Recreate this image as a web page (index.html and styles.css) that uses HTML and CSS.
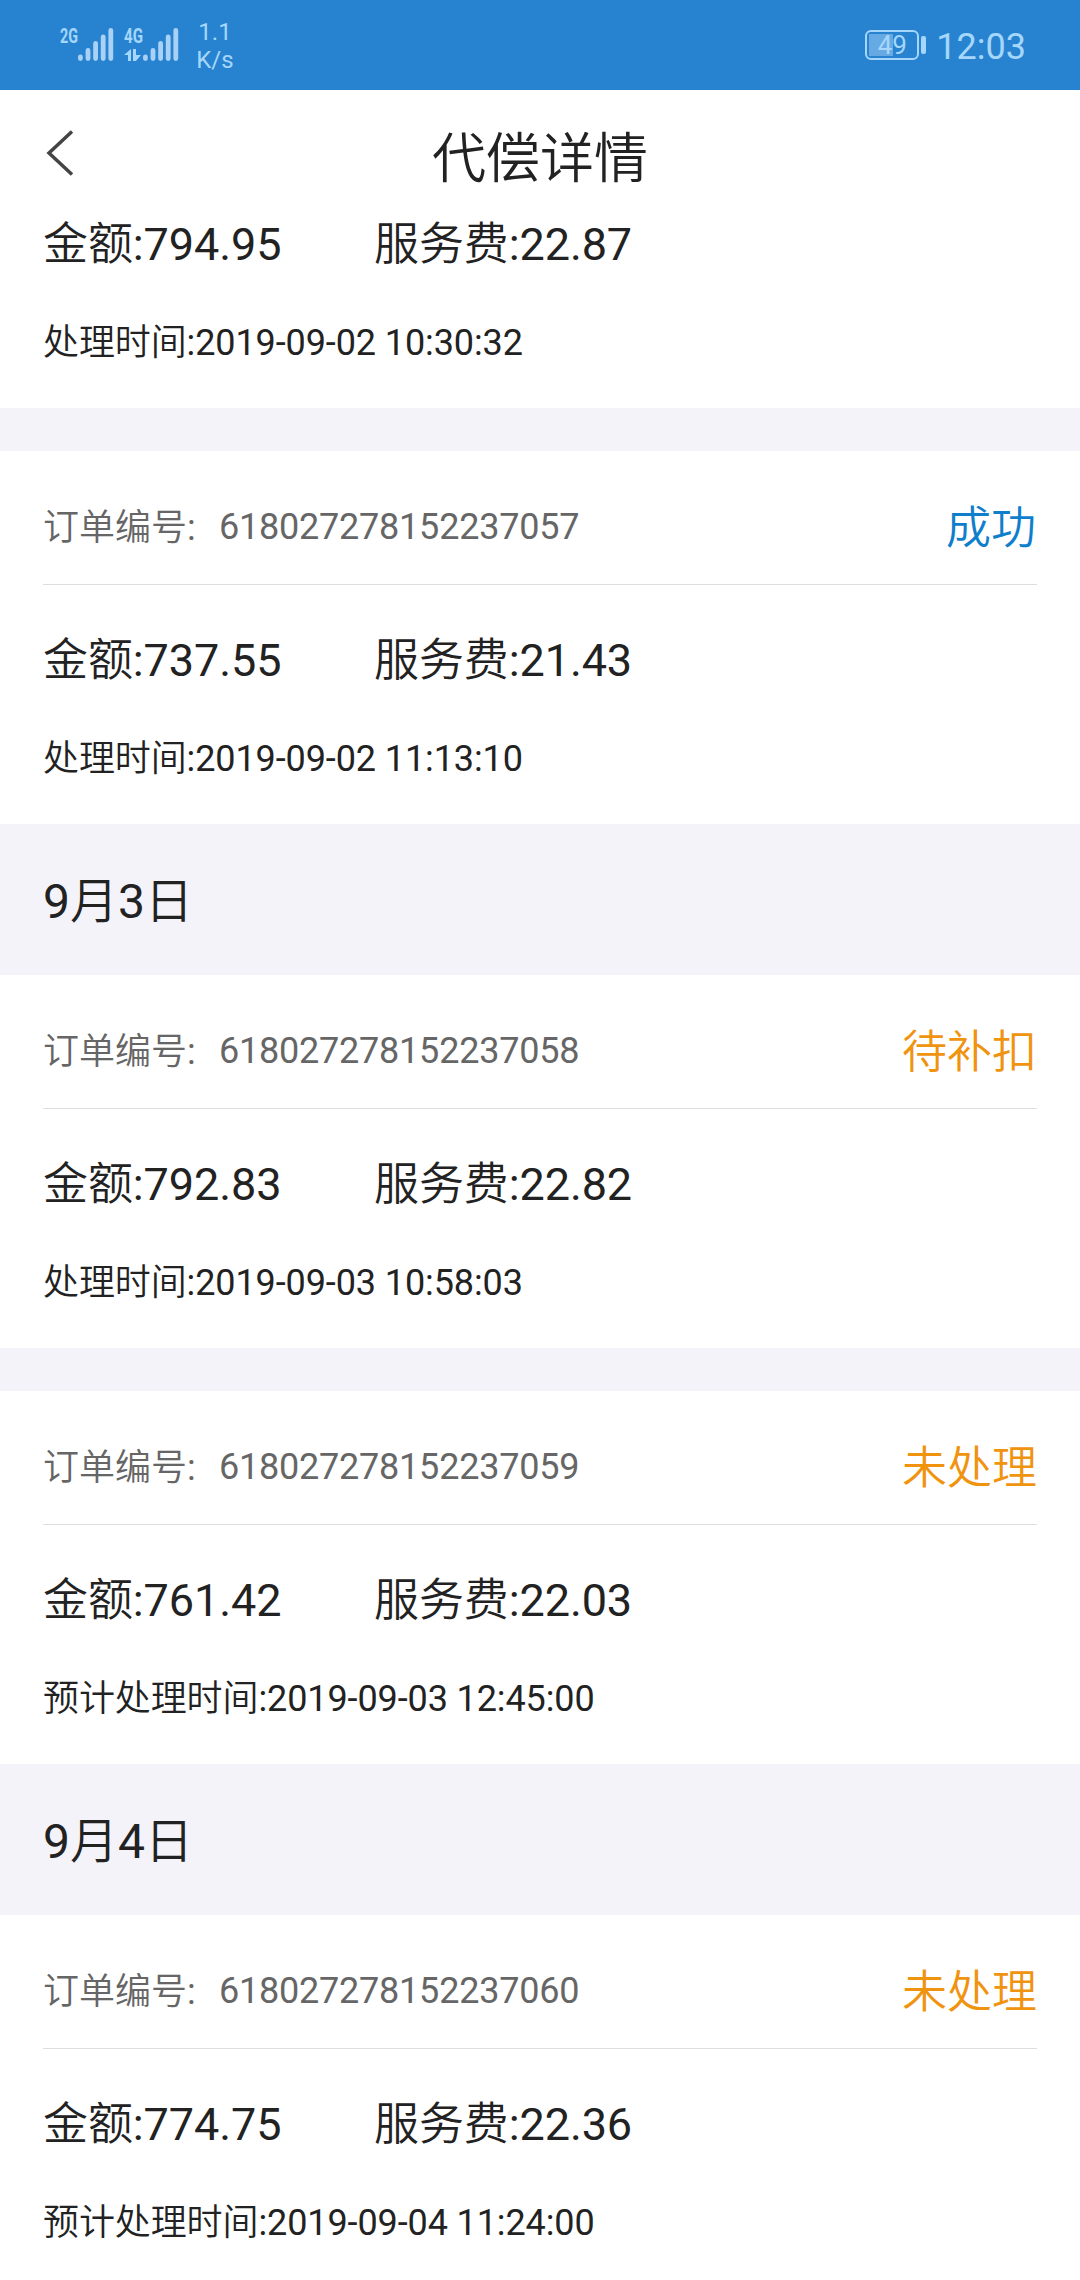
FILE: index.html
```html
<!DOCTYPE html>
<html lang="zh-CN">
<head>
<meta charset="utf-8">
<title>代偿详情</title>
<link rel="stylesheet" href="styles.css">
</head>
<body>
<header class="status">
  <svg class="signals" width="126" height="48" viewBox="-6 -6 126 48">
    <g class="network"><text x="0" y="16" textLength="18" lengthAdjust="spacingAndGlyphs">2G</text><text x="64" y="16" textLength="19" lengthAdjust="spacingAndGlyphs">4G</text></g>
    <g fill="none" stroke="#a9d0f5" stroke-width="4.8" stroke-linecap="round">
      <path d="M20.400 30v1.600M28 23.500v8.100M35.600 16.500v15.100M43.200 10v21.600M50.800 3.500v28.100"/>
      <path d="M85.400 30v1.600M93 23.500v8.100M100.600 16.500v15.100M108.200 10v21.600M115.800 3.500v28.100"/>
    </g>
    <path d="M71 22v12h-3V28h-4zM73 22h3v6h5l-5 6h-3z" fill="#a5d6fb"/>
  </svg>
  <div class="speed"><span>1.1</span><span>K/s</span></div>
  <div class="battery"><span>49</span></div>
  <i class="nub"></i>
  <time class="clock">12:03</time>
</header>
<nav class="nav">
  <svg class="back" width="30" height="46" viewBox="0 0 30 46" fill="none" stroke="#444" stroke-width="3.5"><path d="M27 1.500L4 23l23 21.500"/></svg>
  <h1>代偿详情</h1>
</nav>
<main>
  <section class="card first">
    <div class="sums"><span class="amount">金额:794.95</span><span>服务费:22.87</span></div>
    <p class="when">处理时间:2019-09-02 10:30:32</p>
  </section>
  <section class="card gap">
    <div class="order"><span class="label">订单编号:</span><span class="number">618027278152237057</span><b class="state done">成功</b></div>
    <div class="sums"><span class="amount">金额:737.55</span><span>服务费:21.43</span></div>
    <p class="when">处理时间:2019-09-02 11:13:10</p>
  </section>
  <h2 class="date">9月3日</h2>
  <section class="card">
    <div class="order"><span class="label">订单编号:</span><span class="number">618027278152237058</span><b class="state">待补扣</b></div>
    <div class="sums"><span class="amount">金额:792.83</span><span>服务费:22.82</span></div>
    <p class="when">处理时间:2019-09-03 10:58:03</p>
  </section>
  <section class="card gap">
    <div class="order"><span class="label">订单编号:</span><span class="number">618027278152237059</span><b class="state">未处理</b></div>
    <div class="sums"><span class="amount">金额:761.42</span><span>服务费:22.03</span></div>
    <p class="when">预计处理时间:2019-09-03 12:45:00</p>
  </section>
  <h2 class="date">9月4日</h2>
  <section class="card">
    <div class="order"><span class="label">订单编号:</span><span class="number">618027278152237060</span><b class="state">未处理</b></div>
    <div class="sums"><span class="amount">金额:774.75</span><span>服务费:22.36</span></div>
    <p class="when">预计处理时间:2019-09-04 11:24:00</p>
  </section>
</main>
</body>
</html>
```
FILE: styles.css
```css
* { box-sizing: border-box; }
body { margin: 0; width: 1080px; height: 2280px; overflow: hidden; background: #f3f3f9; color: #222; font-family: Roboto, "Noto Sans CJK SC DemiLight", "Noto Sans CJK SC Light", "Noto Sans CJK SC", sans-serif; }
h1, h2, p { margin: 0; font-weight: 400; }
.status { display: flex; align-items: center; height: 90px; padding: 0 54px; background: #2783d0; color: #a5d6fb; }
.network { font: 700 21px Roboto, sans-serif; fill: #a5d6fb; }
.speed { display: flex; flex-direction: column; align-items: center; width: 70px; padding-top: 2px; font-size: 24px; line-height: 28px; }
.battery { margin-left: auto; width: 54px; height: 30px; padding: 2px; border: 2px solid #a5d6fb; border-radius: 6px; background: linear-gradient(#67aae3, #67aae3) 2px 2px / 24px 22px no-repeat; font-size: 26px; line-height: 23px; text-align: center; }
.nub { width: 5px; height: 18px; margin-left: 2px; border-radius: 2px; background: #a5d6fb; }
.clock { margin-left: 10px; padding-top: 3px; font-size: 36px; line-height: 44px; }
.nav { display: grid; grid-template-columns: 90px 1fr 90px; align-items: center; height: 125px; background: #fff; }
.back { margin-left: 45px; }
.nav h1 { padding-top: 14px; font-size: 54px; line-height: 64px; text-align: center; }
.card { height: 373px; padding: 0 43px; background: #fff; }
.gap { margin-top: 43px; }
.order { display: flex; align-items: flex-start; height: 134px; padding-top: 52px; border-bottom: 1px solid #dedede; font-size: 36px; line-height: 48px; color: #666; }
.label { width: 176px; padding-top: 1px; }
.number { letter-spacing: -0.22px; }
.state { margin: -5px 0 0 auto; font-size: 45px; line-height: 62px; font-weight: 400; color: #f0930f; }
.done { margin-right: 1px; color: #0f7ecb; }
.sums { display: flex; padding-top: 46px; font-size: 45px; line-height: 60px; letter-spacing: -0.1px; }
.first { height: 193px; }
.first .sums { padding-top: 0; }
.amount { width: 331px; }
.when { margin-top: 44px; font-size: 36px; line-height: 48px; letter-spacing: -0.1px; }
.date { height: 151px; padding: 0 43px; font-size: 48px; line-height: 156px; }
```
